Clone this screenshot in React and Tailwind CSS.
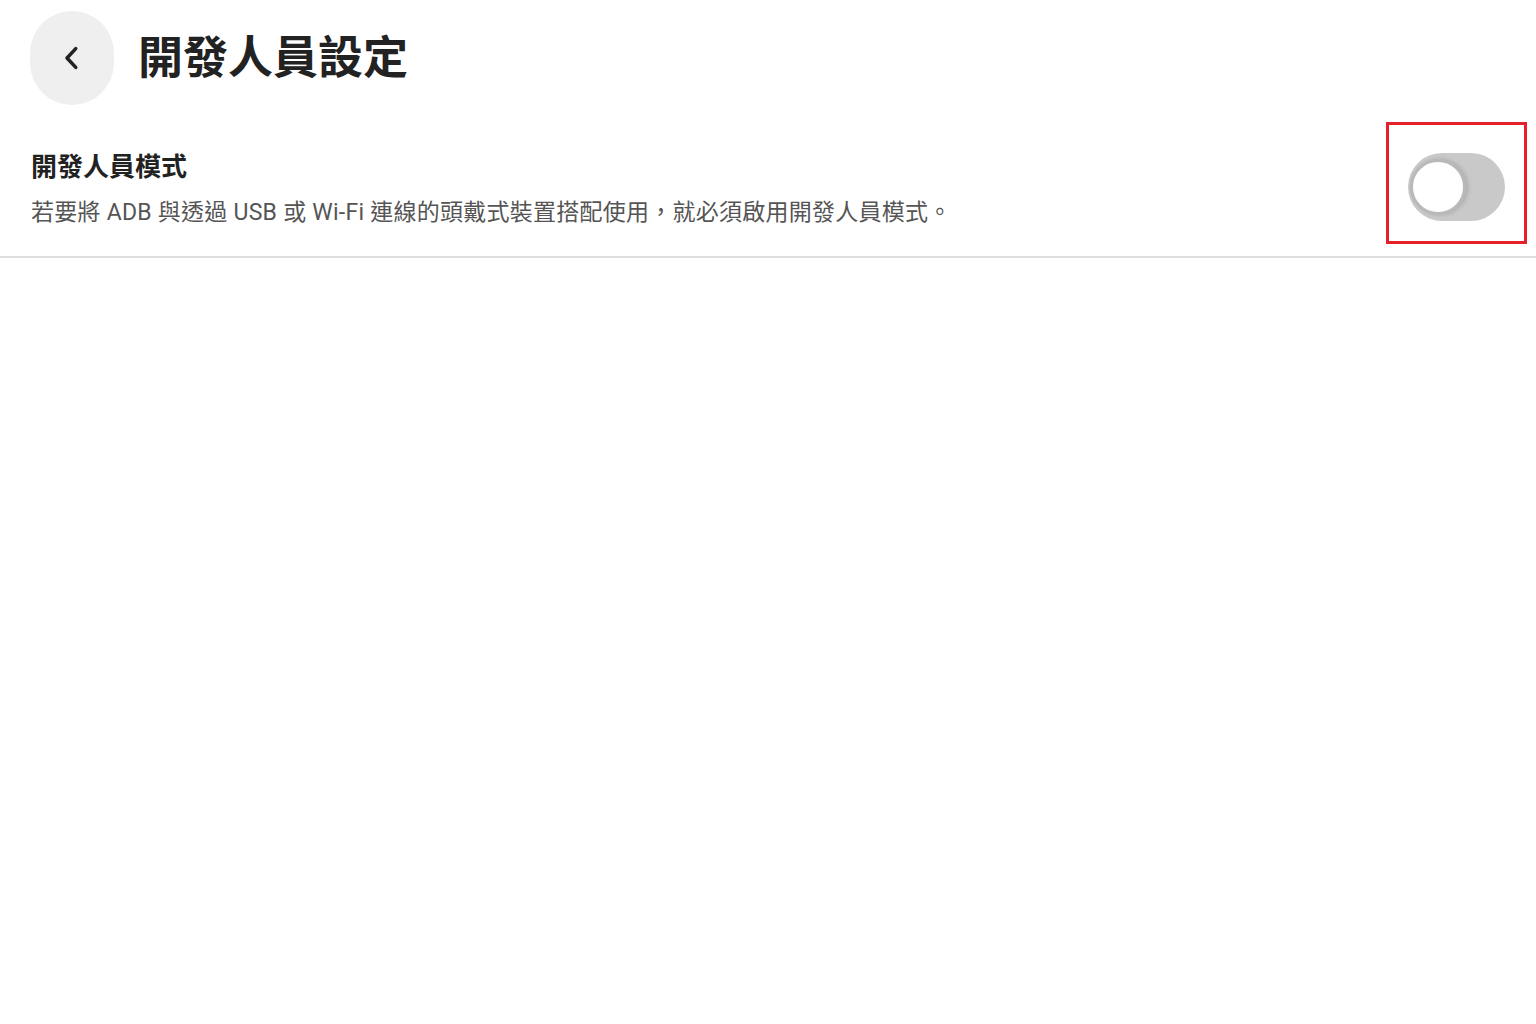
function ChevronLeft() {
  return (
    <svg width="30" height="30" viewBox="0 0 24 24" fill="none" stroke="#222" strokeWidth="2.8" strokeLinecap="round" strokeLinejoin="round">
      <path d="M15 4.5 8 12l7 7.5" />
    </svg>
  )
}

function Toggle() {
  return (
    <div className="relative flex h-[68px] w-[97px] items-center rounded-full bg-[#c9c9c9] pl-[2px]">
      <div className="h-[56px] w-[56px] rounded-full border-[3px] border-[#b9b9b9] bg-white shadow-[2px_0_4px_rgba(0,0,0,0.15)]" />
    </div>
  )
}

export default function App() {
  return (
    <div className="min-h-[1024px] w-full bg-white font-['Roboto','Noto_Sans_CJK_TC',sans-serif] text-[#222]">
      <header className="flex h-[116px] items-center pl-[30px]">
        <button
          type="button"
          className="flex h-[94px] w-[84px] items-center justify-center rounded-full bg-[#efefef]"
        >
          <ChevronLeft />
        </button>
        <h1 className="ml-[24px] text-[45px] font-bold leading-none">開發人員設定</h1>
      </header>

      <div className="flex items-start justify-between border-b-2 border-[#dedede] pb-[12px] pl-[31px] pr-[9px] pt-[6px]">
        <div className="pt-[27px]">
          <h2 className="text-[26px] font-bold leading-[36px]">開發人員模式</h2>
          <p className="mt-[13px] text-[23px] leading-[30px] tracking-[0.25px] text-[#555]">
            若要將 ADB 與透過 USB 或 Wi-Fi 連線的頭戴式裝置搭配使用，就必須啟用開發人員模式。
          </p>
        </div>
        <div className="flex h-[122px] w-[141px] items-center justify-center border-[3px] border-[#e4202a] pt-[8px]">
          <Toggle />
        </div>
      </div>
    </div>
  )
}
